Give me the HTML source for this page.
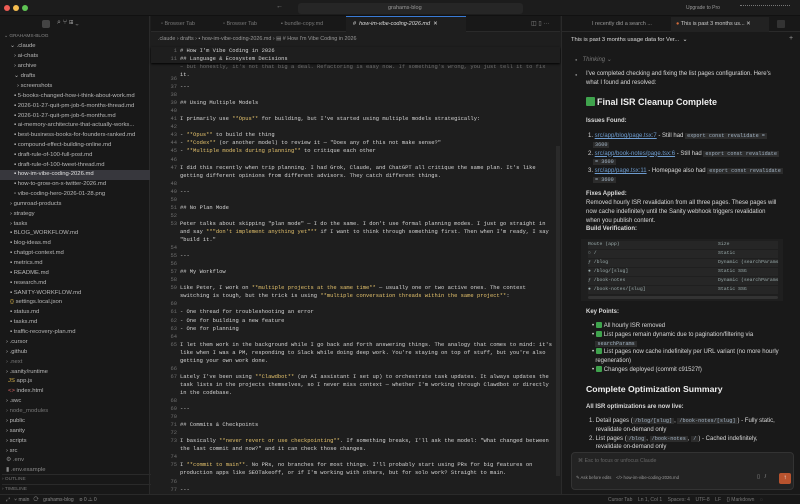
<!DOCTYPE html>
<html><head><meta charset="utf-8"><style>
*{margin:0;padding:0;box-sizing:border-box}
body{width:800px;height:504px;overflow:hidden;background:#1e1e1e;font-family:"Liberation Sans",sans-serif;color:#ccc;position:relative}
.a{position:absolute;white-space:nowrap}
#title{left:0;top:0;width:800px;height:16px;background:#1c1c1c;border-bottom:1px solid #111}
#side{left:0;top:16px;width:150px;height:478px;background:#181818;border-right:1px solid #2a2a2a}
.si{position:absolute;font-size:5.9px;color:#b8b8b8;height:9.8px;line-height:9.8px;width:150px}
#ed{left:151px;top:16px;width:409px;height:478px;background:#1e1e1e}
.ln{position:absolute;font-family:"Liberation Mono",monospace;font-size:5.45px;color:#d4d4d4;height:8px;line-height:8px;left:0;width:409px}
.ln .n{position:absolute;left:0;width:26px;text-align:right;color:#6e6e6e}
.ln .t{position:absolute;left:29px}
.b{color:#e2c06b}
#rp{left:561px;top:16px;width:239px;height:478px;background:#191919;border-left:1px solid #2a2a2a}
.r{position:absolute;font-size:6px;color:#d8d8d8;white-space:nowrap}
.code{font-family:"Liberation Mono",monospace;background:#2c2c2c;color:#9fb0c0;padding:0 2px;font-size:5.2px}
.lk{color:#6e9ccf;text-decoration:underline}
.chk{display:inline-block;width:6px;height:6px;background:#3fa34d;border-radius:1px;vertical-align:-1px;margin-right:2px}
.tr{position:absolute;left:14px;width:190px;height:7.5px;background:#262626;font-family:"Liberation Mono",monospace;font-size:4.8px;color:#9aa;line-height:7.5px}
.tr span{position:absolute;left:130px}
#sb{left:0;top:494px;width:800px;height:10px;background:#181818;border-top:1px solid #2a2a2a;font-size:5px;color:#888}
</style></head><body>
<div class="a" id="title">
 <div class="a" style="left:4px;top:5px;width:6px;height:6px;border-radius:50%;background:#ee5c55"></div>
 <div class="a" style="left:13px;top:5px;width:6px;height:6px;border-radius:50%;background:#f5bd4f"></div>
 <div class="a" style="left:22px;top:5px;width:6px;height:6px;border-radius:50%;background:#5fc454"></div>
 <div class="a" style="left:276px;top:3px;font-size:7px;color:#888">←</div>
 <div class="a" style="left:298px;top:3px;width:225px;height:11px;background:#262626;border-radius:3px;font-size:5.5px;color:#999;line-height:11px;padding-left:90px">grahams-blog</div>
 <div class="a" style="left:686px;top:5px;font-size:5px;color:#999">Upgrade to Pro</div>
 <div class="a" style="left:740px;top:5px;width:50px;height:6px;border-top:1px dotted #777"></div>
</div>

<div class="a" id="side">
 <div class="a" style="left:42px;top:4px;width:8px;height:8px;background:#444;border-radius:2px"></div>
 <div class="a" style="left:57px;top:3px;font-size:7px;color:#999">⌕ ⑂ ⊞ ⌄</div>
 <div class="si" style="top:16px;left:4px;font-size:4.8px;color:#888">⌄ GRAHAMS-BLOG</div>
 <div class="si" style="top:26px;left:10px">⌄ .claude</div>
 <div class="si" style="top:36px;left:14px">› ai-chats</div>
 <div class="si" style="top:46px;left:14px">› archive</div>
 <div class="si" style="top:56px;left:14px">⌄ drafts</div>
 <div class="si" style="top:66px;left:17px">› screenshots</div>
 <div class="si" style="top:76px;left:14px">▪ 5-books-changed-how-i-think-about-work.md</div>
 <div class="si" style="top:86px;left:14px">▪ 2026-01-27-quit-pm-job-6-months-thread.md</div>
 <div class="si" style="top:96px;left:14px">▪ 2026-01-27-quit-pm-job-6-months.md</div>
 <div class="si" style="top:105px;left:14px">▪ ai-memory-architecture-that-actually-works...</div>
 <div class="si" style="top:115px;left:14px">▪ best-business-books-for-founders-ranked.md</div>
 <div class="si" style="top:125px;left:14px">▪ compound-effect-building-online.md</div>
 <div class="si" style="top:135px;left:14px">▪ draft-rule-of-100-full-post.md</div>
 <div class="si" style="top:145px;left:14px">▪ draft-rule-of-100-tweet-thread.md</div>
 <div class="si" style="top:154px;left:0;padding-left:14px;background:#37373d;color:#e0e0e0">▪ how-im-vibe-coding-2026.md</div>
 <div class="si" style="top:164px;left:14px">▪ how-to-grow-on-x-twitter-2026.md</div>
 <div class="si" style="top:174px;left:14px">▫ vibe-coding-hero-2026-01-28.png</div>
 <div class="si" style="top:184px;left:10px">› gumroad-products</div>
 <div class="si" style="top:194px;left:10px">› strategy</div>
 <div class="si" style="top:204px;left:10px">› tasks</div>
 <div class="si" style="top:213px;left:10px">▪ BLOG_WORKFLOW.md</div>
 <div class="si" style="top:223px;left:10px">▪ blog-ideas.md</div>
 <div class="si" style="top:233px;left:10px">▪ chatgpt-context.md</div>
 <div class="si" style="top:243px;left:10px">▪ metrics.md</div>
 <div class="si" style="top:253px;left:10px">▪ README.md</div>
 <div class="si" style="top:263px;left:10px">▪ research.md</div>
 <div class="si" style="top:273px;left:10px">▪ SANITY-WORKFLOW.md</div>
 <div class="si" style="top:282px;left:10px"><span style="color:#d7b24a">{}</span> settings.local.json</div>
 <div class="si" style="top:292px;left:10px">▪ status.md</div>
 <div class="si" style="top:302px;left:10px">▪ tasks.md</div>
 <div class="si" style="top:312px;left:10px">▪ traffic-recovery-plan.md</div>
 <div class="si" style="top:322px;left:6px">› .cursor</div>
 <div class="si" style="top:332px;left:6px">› .github</div>
 <div class="si" style="top:342px;left:6px;color:#777">› .next</div>
 <div class="si" style="top:352px;left:6px">› .sanity/runtime</div>
 <div class="si" style="top:361px;left:8px"><span style="color:#d7b24a">JS</span> app.js</div>
 <div class="si" style="top:371px;left:8px"><span style="color:#d66">&lt;&gt;</span> index.html</div>
 <div class="si" style="top:381px;left:6px">› .swc</div>
 <div class="si" style="top:391px;left:6px;color:#777">› node_modules</div>
 <div class="si" style="top:401px;left:6px">› public</div>
 <div class="si" style="top:411px;left:6px">› sanity</div>
 <div class="si" style="top:421px;left:6px">› scripts</div>
 <div class="si" style="top:431px;left:6px">› src</div>
 <div class="si" style="top:440px;left:6px;color:#888">⚙ .env</div>
 <div class="si" style="top:450px;left:6px;color:#888">▮ .env.example</div>
 <div class="si" style="top:458px;left:2px;font-size:4.8px;color:#777;border-top:1px solid #2a2a2a">› OUTLINE</div>
 <div class="si" style="top:468px;left:2px;font-size:4.8px;color:#777;border-top:1px solid #2a2a2a">› TIMELINE</div>
</div>

<div class="a" id="ed">
 <div class="a" style="left:0;top:0;width:409px;height:16px;background:#181818;border-bottom:1px solid #2a2a2a"></div>
 <div class="a" style="left:10px;top:5px;font-size:5.5px;color:#777">▫ Browser Tab</div>
 <div class="a" style="left:72px;top:5px;font-size:5.5px;color:#777">▫ Browser Tab</div>
 <div class="a" style="left:130px;top:5px;font-size:5.5px;color:#777">▪ bundle-copy.md</div>
 <div class="a" style="left:195px;top:0;width:120px;height:17px;background:#1e1e1e;border-top:1px solid #3a7bd5"></div>
 <div class="a" style="left:202px;top:5px;font-size:5.5px;color:#ddd">#&nbsp; <i>how-im-vibe-coding-2026.md</i>&nbsp; ✕</div>
 <div class="a" style="left:380px;top:4px;font-size:6px;color:#888">◫ ▯ ···</div>
 <div class="a" style="left:7px;top:20px;font-size:5.4px;color:#999">.claude › drafts › ▪ how-im-vibe-coding-2026.md › ▤ # How I'm Vibe Coding in 2026</div>
 <div class="a" style="left:405px;top:130px;width:4px;height:330px;background:#2a2a2a"></div>
 <div class="a" style="left:0;top:43px;width:409px;height:435px;overflow:hidden">
 <div class="ln" style="top:4px"><span class="n">&nbsp;</span><span class="t" style="opacity:.45">– but honestly, it's not that big a deal. Refactoring is easy now. If something's wrong, you just tell it to fix</span></div>
 <div class="ln" style="top:12px"><span class="t">it.</span></div>
 </div>
 <div class="a" style="left:0;top:31px;width:409px;height:16px;background:#1e1e1e;box-shadow:0 1px 2px #000">
 <div class="ln" style="top:0"><span class="n">1</span><span class="t"># How I'm Vibe Coding in 2026</span></div>
 <div class="ln" style="top:8px"><span class="n">11</span><span class="t">## Language &amp; Ecosystem Decisions</span></div>
 </div>
 <div class="a" style="left:0;top:59px;width:409px;height:419px">
 <div class="ln" style="top:0"><span class="n">36</span></div>
 <div class="ln" style="top:8.05px"><span class="n">37</span><span class="t">---</span></div>
 <div class="ln" style="top:16.1px"><span class="n">38</span></div>
 <div class="ln" style="top:24.15px"><span class="n">39</span><span class="t">## Using Multiple Models</span></div>
 <div class="ln" style="top:32.2px"><span class="n">40</span></div>
 <div class="ln" style="top:40.25px"><span class="n">41</span><span class="t">I primarily use <span class="b">**Opus**</span> for building, but I've started using multiple models strategically:</span></div>
 <div class="ln" style="top:48.3px"><span class="n">42</span></div>
 <div class="ln" style="top:56.35px"><span class="n">43</span><span class="t">- <span class="b">**Opus**</span> to build the thing</span></div>
 <div class="ln" style="top:64.4px"><span class="n">44</span><span class="t">- <span class="b">**Codex**</span> (or another model) to review it — "Does any of this not make sense?"</span></div>
 <div class="ln" style="top:72.45px"><span class="n">45</span><span class="t">- <span class="b">**Multiple models during planning**</span> to critique each other</span></div>
 <div class="ln" style="top:80.5px"><span class="n">46</span></div>
 <div class="ln" style="top:88.55px"><span class="n">47</span><span class="t">I did this recently when trip planning. I had Grok, Claude, and ChatGPT all critique the same plan. It's like</span></div>
 <div class="ln" style="top:96.6px"><span class="t">getting different opinions from different advisors. They catch different things.</span></div>
 <div class="ln" style="top:104.65px"><span class="n">48</span></div>
 <div class="ln" style="top:112.7px"><span class="n">49</span><span class="t">---</span></div>
 <div class="ln" style="top:120.75px"><span class="n">50</span></div>
 <div class="ln" style="top:128.8px"><span class="n">51</span><span class="t">## No Plan Mode</span></div>
 <div class="ln" style="top:136.85px"><span class="n">52</span></div>
 <div class="ln" style="top:144.9px"><span class="n">53</span><span class="t">Peter talks about skipping "plan mode" — I do the same. I don't use formal planning modes. I just go straight in</span></div>
 <div class="ln" style="top:152.95px"><span class="t">and say <span class="b">**"don't implement anything yet"**</span> if I want to think through something first. Then when I'm ready, I say</span></div>
 <div class="ln" style="top:161px"><span class="t">"build it."</span></div>
 <div class="ln" style="top:169.05px"><span class="n">54</span></div>
 <div class="ln" style="top:177.1px"><span class="n">55</span><span class="t">---</span></div>
 <div class="ln" style="top:185.15px"><span class="n">56</span></div>
 <div class="ln" style="top:193.2px"><span class="n">57</span><span class="t">## My Workflow</span></div>
 <div class="ln" style="top:201.25px"><span class="n">58</span></div>
 <div class="ln" style="top:209.3px"><span class="n">59</span><span class="t">Like Peter, I work on <span class="b">**multiple projects at the same time**</span> — usually one or two active ones. The context</span></div>
 <div class="ln" style="top:217.35px"><span class="t">switching is tough, but the trick is using <span class="b">**multiple conversation threads within the same project**</span>:</span></div>
 <div class="ln" style="top:225.4px"><span class="n">60</span></div>
 <div class="ln" style="top:233.45px"><span class="n">61</span><span class="t">- One thread for troubleshooting an error</span></div>
 <div class="ln" style="top:241.5px"><span class="n">62</span><span class="t">- One for building a new feature</span></div>
 <div class="ln" style="top:249.55px"><span class="n">63</span><span class="t">- One for planning</span></div>
 <div class="ln" style="top:257.6px"><span class="n">64</span></div>
 <div class="ln" style="top:265.65px"><span class="n">65</span><span class="t">I let them work in the background while I go back and forth answering things. The analogy that comes to mind: it's</span></div>
 <div class="ln" style="top:273.7px"><span class="t">like when I was a PM, responding to Slack while doing deep work. You're staying on top of stuff, but you're also</span></div>
 <div class="ln" style="top:281.75px"><span class="t">getting your own work done.</span></div>
 <div class="ln" style="top:289.8px"><span class="n">66</span></div>
 <div class="ln" style="top:297.85px"><span class="n">67</span><span class="t">Lately I've been using <span class="b">**Clawdbot**</span> (an AI assistant I set up) to orchestrate task updates. It always updates the</span></div>
 <div class="ln" style="top:305.9px"><span class="t">task lists in the projects themselves, so I never miss context — whether I'm working through Clawdbot or directly</span></div>
 <div class="ln" style="top:313.95px"><span class="t">in the codebase.</span></div>
 <div class="ln" style="top:322px"><span class="n">68</span></div>
 <div class="ln" style="top:330.05px"><span class="n">69</span><span class="t">---</span></div>
 <div class="ln" style="top:338.1px"><span class="n">70</span></div>
 <div class="ln" style="top:346.15px"><span class="n">71</span><span class="t">## Commits &amp; Checkpoints</span></div>
 <div class="ln" style="top:354.2px"><span class="n">72</span></div>
 <div class="ln" style="top:362.25px"><span class="n">73</span><span class="t">I basically <span class="b">**never revert or use checkpointing**</span>. If something breaks, I'll ask the model: "What changed between</span></div>
 <div class="ln" style="top:370.3px"><span class="t">the last commit and now?" and it can check those changes.</span></div>
 <div class="ln" style="top:378.35px"><span class="n">74</span></div>
 <div class="ln" style="top:386.4px"><span class="n">75</span><span class="t">I <span class="b">**commit to main**</span>. No PRs, no branches for most things. I'll probably start using PRs for big features on</span></div>
 <div class="ln" style="top:394.45px"><span class="t">production apps like SEOTakeoff, or if I'm working with others, but for solo work? Straight to main.</span></div>
 <div class="ln" style="top:402.5px"><span class="n">76</span></div>
 <div class="ln" style="top:410.55px"><span class="n">77</span><span class="t">---</span></div>
 </div>
</div>

<div class="a" id="rp">
 <div class="a" style="left:0;top:0;width:239px;height:16px;background:#181818;border-bottom:1px solid #2a2a2a"></div>
 <div class="a" style="left:30px;top:5px;font-size:5.5px;color:#999">I recently did a search ...</div>
 <div class="a" style="left:109px;top:1px;width:98px;height:15px;background:#222"></div>
 <div class="a" style="left:114px;top:5px;font-size:5.5px;color:#ccc"><span style="color:#d06a3a">●</span> This is past 3 months us... ✕</div>
 <div class="a" style="left:215px;top:4px;width:8px;height:8px;background:#333;border-radius:1px"></div>
 <div class="r" style="left:9px;top:21px;font-size:5.8px;color:#ddd">This is past 3 months usage data for Ver...&nbsp; ⌄</div>
 <div class="r" style="left:227px;top:19px;font-size:7px;color:#999">+</div>
 <div class="r" style="left:13px;top:40px;color:#777"><span style="font-size:4px">●</span>&nbsp;&nbsp; <i>Thinking</i> ⌄</div>
 <div class="r" style="left:13px;top:56px;color:#888;font-size:4px">●</div>
 <div class="r" style="left:24px;top:54px;line-height:9px">I've completed checking and fixing the list pages configuration. Here's<br>what I found and resolved:</div>
 <div class="r" style="left:24px;top:81px;font-size:9px;font-weight:bold;color:#eee"><span class="chk" style="width:9px;height:9px;vertical-align:-1px"></span>Final ISR Cleanup Complete</div>
 <div class="r" style="left:24px;top:102px;font-weight:bold">Issues Found:</div>
 <div class="r" style="left:26px;top:116px;line-height:8.8px">1. <span class="lk">src/app/blog/page.tsx:7</span> - Still had <span class="code">export const revalidate =</span><br>&nbsp;&nbsp;&nbsp;<span class="code">3600</span><br>2. <span class="lk">src/app/book-notes/page.tsx:6</span> - Still had <span class="code">export const revalidate</span><br>&nbsp;&nbsp;&nbsp;<span class="code">= 3600</span><br>3. <span class="lk">src/app/page.tsx:11</span> - Homepage also had <span class="code">export const revalidate</span><br>&nbsp;&nbsp;&nbsp;<span class="code">= 3600</span></div>
 <div class="r" style="left:24px;top:175px;font-weight:bold">Fixes Applied:</div>
 <div class="r" style="left:24px;top:183px;line-height:8.8px">Removed hourly ISR revalidation from all three pages. These pages will<br>now cache indefinitely until the Sanity webhook triggers revalidation<br>when you publish content.</div>
 <div class="r" style="left:24px;top:210px;font-weight:bold">Build Verification:</div>
 <div class="a" style="left:19px;top:223px;width:202px;height:62px;background:#1f1f1f"></div>
 <div class="tr" style="left:26px;top:225px">Route (app)<span>Size</span></div>
 <div class="tr" style="left:26px;top:234px">○ /<span>Static</span></div>
 <div class="tr" style="left:26px;top:243px">ƒ /blog<span>Dynamic (searchParams</span></div>
 <div class="tr" style="left:26px;top:252px">● /blog/[slug]<span>Static SSG</span></div>
 <div class="tr" style="left:26px;top:261px">ƒ /book-notes<span>Dynamic (searchParams</span></div>
 <div class="tr" style="left:26px;top:270px">● /book-notes/[slug]<span>Static SSG</span></div>
 <div class="a" style="left:26px;top:280px;width:190px;height:3px;background:#333;border-radius:2px"></div>
 <div class="r" style="left:24px;top:293px;font-weight:bold">Key Points:</div>
 <div class="r" style="left:30px;top:306px;line-height:8.8px">• <span class="chk"></span>All hourly ISR removed<br>• <span class="chk"></span>List pages remain dynamic due to pagination/filtering via<br>&nbsp;&nbsp;<span class="code">searchParams</span><br>• <span class="chk"></span>List pages now cache indefinitely per URL variant (no more hourly<br>&nbsp;&nbsp;regeneration)<br>• <span class="chk"></span>Changes deployed (commit c91527f)</div>
 <div class="r" style="left:24px;top:368px;font-size:8.7px;font-weight:bold;color:#eee">Complete Optimization Summary</div>
 <div class="r" style="left:24px;top:388px;font-weight:bold">All ISR optimizations are now live:</div>
 <div class="r" style="left:27px;top:401px;line-height:8.8px">1. Detail pages (<span class="code">/blog/[slug]</span>, <span class="code">/book-notes/[slug]</span>) - Fully static,<br>&nbsp;&nbsp;&nbsp;&nbsp;revalidate on-demand only<br>2. List pages (<span class="code">/blog</span>, <span class="code">/book-notes</span>, <span class="code">/</span>) - Cached indefinitely,<br>&nbsp;&nbsp;&nbsp;&nbsp;revalidate on-demand only</div>
 <div class="a" style="left:9px;top:436px;width:223px;height:38px;background:#232323;border:1px solid #333;border-radius:4px"></div>
 <div class="r" style="left:16px;top:442px;font-size:5.2px;color:#666">⌘ Esc to focus or unfocus Claude</div>
 <div class="r" style="left:14px;top:459px;font-size:4.3px;color:#999">✎ Ask before edits&nbsp;&nbsp;&nbsp;&nbsp;&lt;/&gt; how-im-vibe-coding-2026.md</div>
 <div class="r" style="left:195px;top:458px;font-size:5.5px;color:#999">▯&nbsp;&nbsp; /</div>
 <div class="a" style="left:217px;top:457px;width:12px;height:11px;background:#b8532e;border-radius:2px;color:#fff;font-size:6px;text-align:center;line-height:11px">↑</div>
</div>

<div class="a" id="sb">
 <div class="a" style="left:6px;top:2px">⤢&nbsp;&nbsp; ⑂ main&nbsp;&nbsp; ⟳&nbsp;&nbsp; grahams-blog&nbsp;&nbsp;&nbsp; ⊗ 0 ⚠ 0</div>
 <div class="a" style="left:608px;top:2px;color:#777">Cursor Tab&nbsp;&nbsp;&nbsp; Ln 1, Col 1&nbsp;&nbsp;&nbsp; Spaces: 4&nbsp;&nbsp;&nbsp; UTF-8&nbsp;&nbsp;&nbsp; LF&nbsp;&nbsp;&nbsp; {} Markdown&nbsp;&nbsp;&nbsp; ◌</div>
</div>
</body></html>
